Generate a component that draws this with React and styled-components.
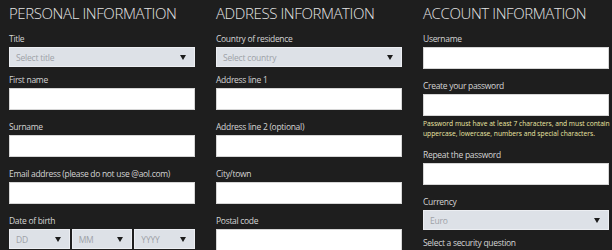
import React from "react";
import styled, { createGlobalStyle } from "styled-components";

const GlobalStyle = createGlobalStyle`
  html, body {
    margin: 0;
    background: #1e1e1e;
  }
  body {
    font-family: "Open Sans", Lato, sans-serif;
  }
`;

const Page = styled.div`
  display: grid;
  grid-template-columns: repeat(3, 186px);
  column-gap: 21px;
  padding-left: 9px;
  height: 250px;
  overflow: hidden;
`;

const Column = styled.section`
  display: flex;
  flex-direction: column;
`;

const Heading = styled.h2`
  margin: 3px 0 10px;
  font-size: 15px;
  line-height: 20px;
  font-weight: 300;
  letter-spacing: -0.4px;
  color: #e4e4e4;
  white-space: nowrap;
`;

const Field = styled.div`
  display: flex;
  flex-direction: column;
  margin-bottom: ${(p) => (p.$select ? "7px" : "11px")};
`;

const Label = styled.label`
  font-size: 8.5px;
  line-height: 11px;
  margin-bottom: 3px;
  letter-spacing: -0.3px;
  color: #d4d4d4;
  white-space: nowrap;
`;

const Input = styled.div`
  box-sizing: border-box;
  height: 22px;
  background: #fff;
  border: 1px solid #d6d6d6;
`;

const SelectBox = styled.div`
  box-sizing: border-box;
  height: 20px;
  display: flex;
  align-items: center;
  justify-content: space-between;
  padding: 0 8px 0 6px;
  background: #dde1e7;
  border: 1px solid #eceef2;
  font-size: 8.5px;
  letter-spacing: -0.2px;
  color: #9ea2a8;
`;

const Arrow = styled.span`
  width: 0;
  height: 0;
  border-left: 3px solid transparent;
  border-right: 3px solid transparent;
  border-top: 5px solid #1c1c1c;
`;

const DateRow = styled.div`
  display: grid;
  grid-template-columns: repeat(3, 1fr);
  gap: 2px;
`;

const Hint = styled.p`
  margin: 3px 0 10px;
  font-size: 6.7px;
  line-height: 10px;
  color: #ebe6a3;
  white-space: nowrap;
`;

const Select = ({ placeholder }) => (
  <SelectBox>
    <span>{placeholder}</span>
    <Arrow />
  </SelectBox>
);

const TextField = ({ label }) => (
  <Field>
    <Label>{label}</Label>
    <Input />
  </Field>
);

const SelectField = ({ label, placeholder }) => (
  <Field $select>
    <Label>{label}</Label>
    <Select placeholder={placeholder} />
  </Field>
);

export default function App() {
  return (
    <>
      <GlobalStyle />
      <Page>
        <Column>
          <Heading>PERSONAL INFORMATION</Heading>
          <SelectField label="Title" placeholder="Select title" />
          <TextField label="First name" />
          <TextField label="Surname" />
          <TextField label="Email address (please do not use @aol.com)" />
          <Field $select>
            <Label>Date of birth</Label>
            <DateRow>
              <Select placeholder="DD" />
              <Select placeholder="MM" />
              <Select placeholder="YYYY" />
            </DateRow>
          </Field>
        </Column>
        <Column>
          <Heading>ADDRESS INFORMATION</Heading>
          <SelectField label="Country of residence" placeholder="Select country" />
          <TextField label="Address line 1" />
          <TextField label="Address line 2 (optional)" />
          <TextField label="City/town" />
          <TextField label="Postal code" />
        </Column>
        <Column>
          <Heading>ACCOUNT INFORMATION</Heading>
          <TextField label="Username" />
          <Field style={{ marginBottom: 0 }}>
            <Label>Create your password</Label>
            <Input />
          </Field>
          <Hint>
            Password must have at least 7 characters, and must contain
            <br />
            uppercase, lowercase, numbers and special characters.
          </Hint>
          <TextField label="Repeat the password" />
          <SelectField label="Currency" placeholder="Euro" />
          <Field>
            <Label>Select a security question</Label>
          </Field>
        </Column>
      </Page>
    </>
  );
}
